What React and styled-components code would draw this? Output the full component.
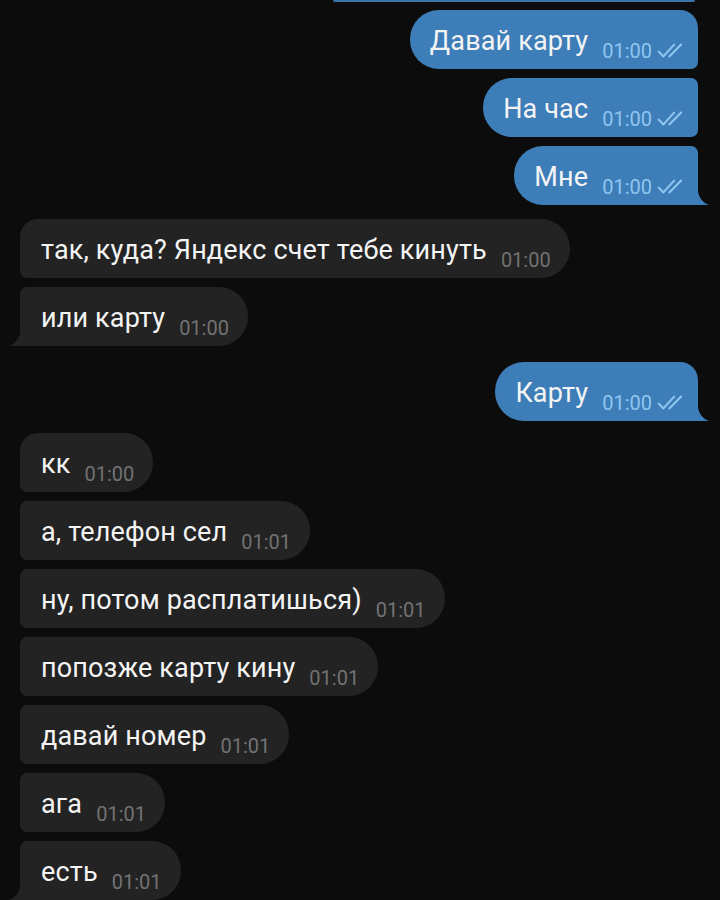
import styled, { createGlobalStyle } from 'styled-components';

const GlobalStyle = createGlobalStyle`
  html, body {
    margin: 0;
    padding: 0;
    background: #0c0c0d;
  }
  body {
    font-family: Roboto, "Noto Sans", "Liberation Sans", sans-serif;
    -webkit-font-smoothing: antialiased;
  }
`;

const messages = [
  { out: true, text: 'Давай карту', time: '01:00', first: true, gap: 8 },
  { out: true, text: 'На час', time: '01:00', gap: 9 },
  { out: true, text: 'Мне', time: '01:00', last: true, gap: 9 },
  { text: 'так, куда? Яндекс счет тебе кинуть', time: '01:00', first: true, gap: 14 },
  { text: 'или карту', time: '01:00', last: true, gap: 9 },
  { out: true, text: 'Карту', time: '01:00', first: true, last: true, gap: 16 },
  { text: 'кк', time: '01:00', first: true, gap: 12 },
  { text: 'а, телефон сел', time: '01:01', gap: 9 },
  { text: 'ну, потом расплатишься)', time: '01:01', gap: 9 },
  { text: 'попозже карту кину', time: '01:01', gap: 9 },
  { text: 'давай номер', time: '01:01', gap: 9 },
  { text: 'ага', time: '01:01', gap: 9 },
  { text: 'есть', time: '01:01', last: true, gap: 9 },
];

function Ticks() {
  return (
    <TickIcon viewBox="0 0 28 14" fill="none">
      <path d="M1.5 8 L6 12.5 L16 1.5" />
      <path d="M11.5 12.5 L22.5 1.5" />
    </TickIcon>
  );
}

function Tail({ out }) {
  return (
    <TailShape $out={out} viewBox="0 0 12 22">
      <path d="M0 0 C0 12 4 19 12 22 L0 22 Z" />
    </TailShape>
  );
}

function Message({ out, text, time, first, last, gap }) {
  return (
    <Row $out={out} $gap={gap}>
      <Bubble $out={out} $first={first} $last={last}>
        <Text>{text}</Text>
        <Meta $out={out}>
          {time}
          {out && <Ticks />}
        </Meta>
        {last && <Tail out={out} />}
      </Bubble>
    </Row>
  );
}

export default function App() {
  return (
    <>
      <GlobalStyle />
      <Chat>
        <CutOffBubble />
        {messages.map((m, i) => (
          <Message key={i} {...m} />
        ))}
      </Chat>
    </>
  );
}

const Chat = styled.div`
  display: flex;
  flex-direction: column;
  width: 720px;
  height: 900px;
  overflow: hidden;
  background: #0c0c0d;
`;

const CutOffBubble = styled.div`
  align-self: flex-end;
  width: 362px;
  height: 2px;
  margin-right: 25px;
  background: #3a74a8;
  border-radius: 0 0 6px 6px;
`;

const Row = styled.div`
  display: flex;
  justify-content: ${(p) => (p.$out ? 'flex-end' : 'flex-start')};
  padding: 0 22px 0 20px;
  margin-top: ${(p) => p.$gap}px;
`;

const Bubble = styled.div`
  position: relative;
  display: flex;
  align-items: flex-end;
  box-sizing: border-box;
  height: 59px;
  padding: ${(p) => (p.$out ? '16px 11px 8px 20px' : '16px 19px 8px 21px')};
  background: ${(p) => (p.$out ? '#3d7db8' : '#232323')};
  color: #f4f4f4;
  border-radius: ${(p) => {
    const big = '29px';
    const top = p.$first ? '18px' : '7px';
    const bottom = p.$last ? '0' : '7px';
    return p.$out
      ? `${big} ${top} ${bottom} ${big}`
      : `${top} ${big} ${big} ${bottom}`;
  }};
`;

const Text = styled.span`
  font-size: 27px;
  letter-spacing: 0.15px;
  line-height: 30px;
  margin-bottom: 5px;
  white-space: nowrap;
`;

const Meta = styled.span`
  display: flex;
  align-items: center;
  gap: 5px;
  margin-left: 14px;
  font-size: 20px;
  line-height: 19px;
  color: ${(p) => (p.$out ? '#90c5ef' : '#727272')};
  white-space: nowrap;
`;

const TickIcon = styled.svg`
  width: 30px;
  height: 15px;
  margin-bottom: 2px;
  stroke: #90c5ef;
  stroke-width: 2;
  stroke-linecap: round;
  stroke-linejoin: round;
`;

const TailShape = styled.svg`
  position: absolute;
  bottom: 0;
  width: 12px;
  height: 22px;
  fill: ${(p) => (p.$out ? '#3d7db8' : '#232323')};
  ${(p) => (p.$out ? 'right: -11px;' : 'left: -11px; transform: scaleX(-1);')}
`;
